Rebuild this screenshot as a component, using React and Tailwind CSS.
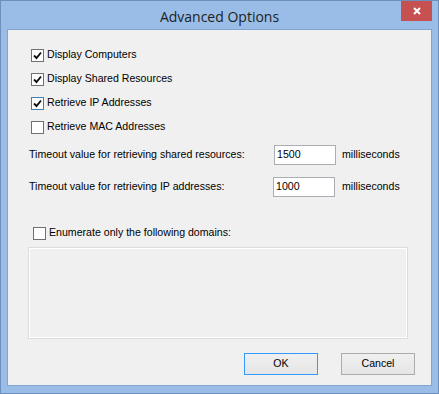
import React from "react";

const Check = ({ checked, focus }) => (
  <span
    className={
      "w-[13px] h-[13px] border bg-white flex items-center justify-center shrink-0 " +
      (focus ? "border-[#3c7fb1]" : "border-[#707070]")
    }
  >
    {checked && (
      <svg width="9" height="9" viewBox="0 0 9 9">
        <path d="M1 4.5 L3.5 7 L8 1.5" fill="none" stroke="#111" strokeWidth="1.9" />
      </svg>
    )}
  </span>
);

const CheckRow = ({ label, checked, focus }) => (
  <div className="h-[24px] flex items-center gap-[3px]">
    <Check checked={checked} focus={focus} />
    <span>{label}</span>
  </div>
);

const App = () => {
  return (
    <div
      className="w-[439px] h-[394px] bg-[#99bde6] border border-[#6c8fbe] flex flex-col text-[10.6px] text-black"
      style={{ fontFamily: '"Liberation Sans", Arial, sans-serif' }}
    >
      {/* title bar */}
      <div className="h-[28px] relative flex items-center justify-center">
        <span
          className="text-[14px] text-[#1e1e1e] mt-[2px]"
          style={{ fontFamily: '"Open Sans", "Noto Sans", sans-serif' }}
        >
          Advanced Options
        </span>
        <div className="absolute right-[6px] top-0 w-[31px] h-[20px] bg-[#c75050] flex items-center justify-center">
          <svg width="10" height="10" viewBox="0 0 10 10">
            <path d="M2 2 L8 8 M8 2 L2 8" stroke="#fff" strokeWidth="2" />
          </svg>
        </div>
      </div>

      {/* client area */}
      <div className="mx-[6px] h-[357px] bg-[#f0f0f0] border border-[#83a6d0] flex flex-col">
        <div className="pl-[23px] pt-[13px] flex flex-col">
          <CheckRow label="Display Computers" checked />
          <CheckRow label="Display Shared Resources" checked />
          <CheckRow label="Retrieve IP Addresses" checked focus />
          <CheckRow label="Retrieve MAC Addresses" />
        </div>

        <div className="pl-[21px] mt-[6px] flex flex-col gap-[12px]">
          <div className="flex items-center h-[20px]">
            <span className="w-[245px]">Timeout value for retrieving shared resources:</span>
            <div className="w-[62px] h-[20px] bg-white border border-[#abadb3] px-[2px] flex items-center">
              1500
            </div>
            <span className="ml-[6px]">milliseconds</span>
          </div>
          <div className="flex items-center h-[20px]">
            <span className="w-[244px]">Timeout value for retrieving IP addresses:</span>
            <div className="w-[62px] h-[20px] bg-white border border-[#abadb3] px-[2px] flex items-center">
              1000
            </div>
            <span className="ml-[7px]">milliseconds</span>
          </div>
        </div>

        <div className="pl-[25px] mt-[28px] h-[16px] flex items-center gap-[3px]">
          <Check />
          <span>Enumerate only the following domains:</span>
        </div>

        <div className="ml-[20px] mt-[6px] w-[380px] h-[92px] border border-[#dcdcdc] p-0">
          <div className="w-full h-full border border-white"></div>
        </div>

        <div className="mt-[14px] flex justify-end gap-[23px] pr-[16px]">
          <button className="w-[74px] h-[22px] border border-[#3399ff] bg-gradient-to-b from-[#f0f0f0] to-[#e5e5e5]">
            OK
          </button>
          <button className="w-[74px] h-[22px] border border-[#acacac] bg-gradient-to-b from-[#f0f0f0] to-[#e5e5e5]">
            Cancel
          </button>
        </div>
      </div>
    </div>
  );
};

export default App;
